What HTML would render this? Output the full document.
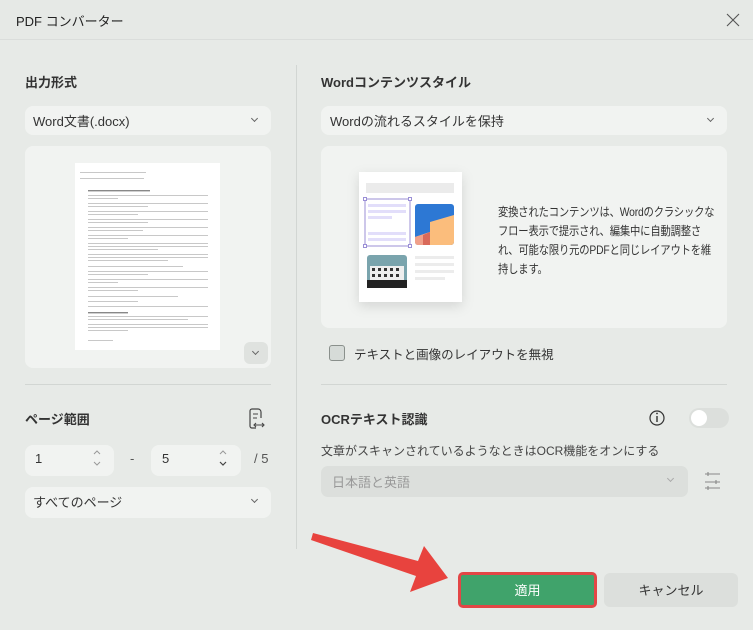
<!DOCTYPE html>
<html><head><meta charset="utf-8"><style>
*{box-sizing:border-box;margin:0;padding:0}
body{width:753px;height:630px;overflow:hidden;background:#e7eae7;font-family:"Liberation Sans","Noto Sans CJK JP",sans-serif;color:#222;position:relative}
.a{position:absolute}
.t{font-size:13px;white-space:nowrap}
.box{position:absolute;background:#f1f3f1;border-radius:8px}
.chev{position:absolute;width:6px;height:6px;border-right:1.3px solid #666;border-bottom:1.3px solid #666;transform:rotate(45deg)}
</style></head><body>
<div class="a" style="left:0;top:0;width:753px;height:40px;background:#e6e9e6;border-bottom:1px solid #dadddb"></div>
<div class="a t" style="left:16px;top:11px;font-size:13px">PDF コンバーター</div>

<div class="a t" style="left:25px;top:72px;font-size:13px;font-weight:bold;color:#333">出力形式</div>
<div class="box" style="left:25px;top:106px;width:246px;height:29px"></div>
<div class="a t" style="left:33px;top:111px;color:#333">Word文書(.docx)</div>
<div class="chev" style="left:252px;top:116px;width:5px;height:5px"></div>
<div class="box" style="left:25px;top:146px;width:246px;height:222px"></div>
<div class="a" style="left:244px;top:342px;width:24px;height:22px;background:#dfe2df;border-radius:6px"></div>
<div class="chev" style="left:253px;top:349px;width:5px;height:5px"></div>
<div class="a" style="left:25px;top:384px;width:246px;height:1px;background:#d2d6d3"></div>
<div class="a t" style="left:25px;top:409px;font-weight:bold;color:#333">ページ範囲</div>
<div class="box" style="left:25px;top:445px;width:89px;height:31px"></div>
<div class="a t" style="left:35px;top:451px;color:#333">1</div>
<div class="box" style="left:151px;top:445px;width:90px;height:31px"></div>
<div class="a t" style="left:162px;top:451px;color:#333">5</div>
<div class="a t" style="left:130px;top:451px;color:#555">-</div>
<div class="a t" style="left:254px;top:451px;color:#555">/ 5</div>
<div class="box" style="left:25px;top:487px;width:246px;height:31px"></div>
<div class="a t" style="left:33px;top:492px;color:#333">すべてのページ</div>
<div class="chev" style="left:252px;top:497px;width:5px;height:5px"></div>

<div class="a" style="left:296px;top:65px;width:1px;height:484px;background:#d2d6d3"></div>

<div class="a t" style="left:321px;top:72px;font-weight:bold;color:#333">Wordコンテンツスタイル</div>
<div class="box" style="left:321px;top:106px;width:406px;height:29px"></div>
<div class="a t" style="left:330px;top:111px;color:#333">Wordの流れるスタイルを保持</div>
<div class="chev" style="left:708px;top:116px;width:5px;height:5px"></div>
<div class="box" style="left:321px;top:146px;width:406px;height:182px"></div>
<div class="a" style="left:498px;top:203px;white-space:nowrap;font-size:12px;letter-spacing:-0.2px;line-height:19px;color:#333;transform:scaleX(0.86);transform-origin:0 0">変換されたコンテンツは、Wordのクラシックな<br>フロー表示で提示され、編集中に自動調整さ<br>れ、可能な限り元のPDFと同じレイアウトを維<br>持します。</div>
<div class="a" style="left:329px;top:345px;width:16px;height:16px;border:1px solid #8a908c;border-radius:3px;background:#d6dbd8"></div>
<div class="a t" style="left:354px;top:344px;font-size:12.5px;color:#333">テキストと画像のレイアウトを無視</div>
<div class="a" style="left:321px;top:384px;width:406px;height:1px;background:#d2d6d3"></div>
<div class="a t" style="left:321px;top:409px;font-weight:bold;color:#333">OCRテキスト認識</div>
<div class="a" style="left:689px;top:408px;width:40px;height:20px;border-radius:10px;background:#dcdfdc"></div>
<div class="a" style="left:691px;top:410px;width:16px;height:16px;border-radius:8px;background:#fff"></div>
<div class="a t" style="left:321px;top:442px;font-size:12px;color:#444">文章がスキャンされているようなときはOCR機能をオンにする</div>
<div class="a" style="left:321px;top:466px;width:367px;height:31px;background:#dcdfdc;border-radius:7px"></div>
<div class="a t" style="left:332px;top:472px;color:#999">日本語と英語</div>
<div class="chev" style="left:668px;top:476px;width:5px;height:5px;border-color:#aaa"></div>

<div class="a" style="left:458px;top:572px;width:139px;height:36px;border:3px solid #e34646;border-radius:5px;background:#40a36b"></div>
<div class="a t" style="left:458px;top:580px;width:139px;text-align:center;color:#fff">適用</div>
<div class="a" style="left:604px;top:573px;width:134px;height:34px;border-radius:6px;background:#dcdfdc"></div>
<div class="a t" style="left:604px;top:580px;width:134px;text-align:center;color:#333">キャンセル</div>

<svg class="a" style="left:0;top:0" width="753" height="630" viewBox="0 0 753 630">
<path d="M727 14l12 12M739 14l-12 12" stroke="#555" stroke-width="1.1"/>
<rect x="75" y="163" width="145" height="187" fill="#fff"/>
<g fill="#c8c8c8">
<rect x="80" y="172" width="66" height="1"/><rect x="80" y="178" width="64" height="1"/>
<rect x="88" y="190" width="62" height="1.4" fill="#888"/>
<rect x="88" y="195" width="120" height="1"/><rect x="88" y="198" width="30" height="1"/>
<rect x="88" y="203" width="120" height="1"/><rect x="88" y="206" width="60" height="1"/>
<rect x="88" y="211" width="120" height="1"/><rect x="88" y="214" width="50" height="1"/>
<rect x="88" y="219" width="120" height="1"/><rect x="88" y="222" width="60" height="1"/>
<rect x="88" y="227" width="120" height="1"/><rect x="88" y="230" width="55" height="1"/>
<rect x="88" y="235" width="120" height="1"/><rect x="88" y="238" width="40" height="1"/>
<rect x="88" y="243" width="120" height="1"/><rect x="88" y="246" width="120" height="1"/><rect x="88" y="249" width="70" height="1"/>
<rect x="88" y="254" width="120" height="1"/><rect x="88" y="257" width="120" height="1"/><rect x="88" y="260" width="80" height="1"/>
<rect x="88" y="266" width="95" height="1"/>
<rect x="88" y="271" width="120" height="1"/><rect x="88" y="274" width="60" height="1"/>
<rect x="88" y="279" width="120" height="1"/><rect x="88" y="282" width="30" height="1"/>
<rect x="88" y="287" width="120" height="1"/><rect x="88" y="290" width="50" height="1"/>
<rect x="88" y="296" width="90" height="1"/><rect x="88" y="301" width="50" height="1"/>
<rect x="88" y="306" width="120" height="1"/>
<rect x="88" y="312" width="40" height="1.4" fill="#888"/>
<rect x="88" y="316" width="120" height="1"/><rect x="88" y="319" width="100" height="1"/>
<rect x="88" y="324" width="120" height="1"/><rect x="88" y="327" width="120" height="1"/><rect x="88" y="330" width="40" height="1"/>
<rect x="88" y="340" width="25" height="1"/>
</g>
<rect x="359" y="172" width="103" height="130" fill="#fff" style="filter:drop-shadow(0 4px 6px rgba(0,0,0,.12))"/>
<rect x="366" y="183" width="88" height="10" fill="#ebebeb"/>
<rect x="365" y="199" width="45" height="47" fill="none" stroke="#9b8fd6" stroke-width="1"/>
<g fill="#fff" stroke="#9b8fd6" stroke-width="1"><rect x="363.5" y="197.5" width="3" height="3"/><rect x="408.5" y="197.5" width="3" height="3"/><rect x="363.5" y="244.5" width="3" height="3"/><rect x="408.5" y="244.5" width="3" height="3"/></g>
<g fill="#e2defa"><rect x="368" y="204" width="38" height="3"/><rect x="368" y="210" width="38" height="3"/><rect x="368" y="216" width="24" height="3"/><rect x="368" y="232" width="38" height="3"/><rect x="368" y="238" width="38" height="3"/></g>
<clipPath id="c"><rect x="415" y="204" width="39" height="41" rx="3"/></clipPath>
<g clip-path="url(#c)"><rect x="415" y="204" width="39" height="41" fill="#2d78d4"/><path d="M415 237L430 232 430 222 454 215 454 245 415 245Z" fill="#fbbd7c"/><path d="M415 237L430 232 430 245 415 245Z" fill="#f0a08a"/><path d="M423 235L430 232 430 245 423 245Z" fill="#d9695a"/></g>
<rect x="367" y="255" width="40" height="33" rx="3" fill="#7aa4ad"/>
<rect x="370" y="266" width="34" height="14" fill="#eee"/>
<g fill="#333"><rect x="372" y="268" width="3" height="3"/><rect x="378" y="268" width="3" height="3"/><rect x="384" y="268" width="3" height="3"/><rect x="390" y="268" width="3" height="3"/><rect x="396" y="268" width="3" height="3"/><rect x="372" y="274" width="3" height="3"/><rect x="378" y="274" width="3" height="3"/><rect x="384" y="274" width="3" height="3"/><rect x="390" y="274" width="3" height="3"/><rect x="396" y="274" width="3" height="3"/></g>
<rect x="367" y="280" width="40" height="8" fill="#222"/>
<g fill="#ececec"><rect x="415" y="256" width="39" height="3"/><rect x="415" y="263" width="39" height="3"/><rect x="415" y="270" width="39" height="3"/><rect x="415" y="277" width="30" height="3"/></g>
<path d="M94 454l3-3 3 3M94 462l3 3 3-3" stroke="#999" fill="none" stroke-width="1"/>
<path d="M220 454l3-3 3 3" stroke="#999" fill="none" stroke-width="1"/><path d="M220 462l3 3 3-3" stroke="#444" fill="none" stroke-width="1.2"/>
<path d="M256 428h-4a2 2 0 0 1-2-2v-15a2 2 0 0 1 2-2h6a3 3 0 0 1 3 3v6" stroke="#444" fill="none" stroke-width="1.2"/>
<path d="M253 414h5M253 418h4M255 425h8M256 423l-2 2 2 2M262 423l2 2-2 2" stroke="#444" fill="none" stroke-width="1.1"/>
<circle cx="657" cy="418" r="7" stroke="#333" fill="none" stroke-width="1.2"/>
<path d="M657 416v6" stroke="#333" stroke-width="1.4"/><circle cx="657" cy="413.5" r="0.9" fill="#333"/>
<g stroke="#888" stroke-width="1.1"><path d="M705 474h15M705 482h15M705 488h15"/><path d="M708 472v4M716 480v4M708 486v4"/></g>
<path d="M311 540L313 533 418 561 424 546 448 578 410 592 416 576Z" fill="#e8433e"/>
</svg>
</body></html>
